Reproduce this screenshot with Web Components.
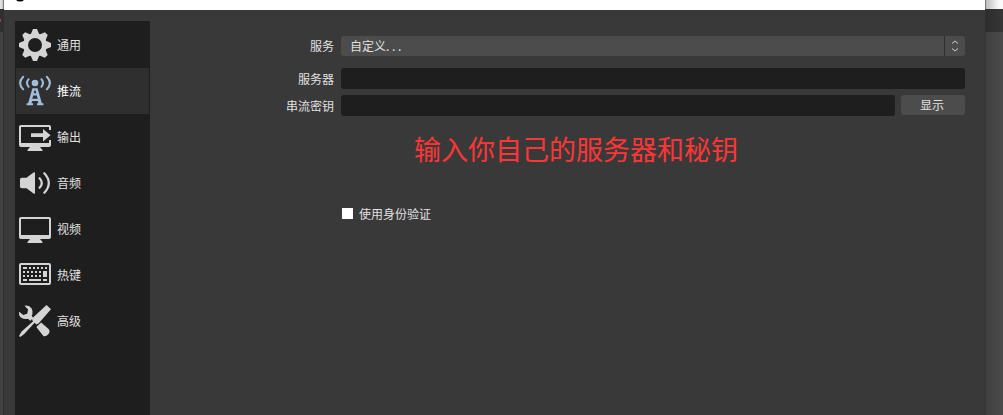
<!DOCTYPE html>
<html lang="zh-CN">
<head>
  <meta charset="utf-8">
  <title>设置</title>
  <style>
    body {
      margin: 0;
      height: 415px;
      overflow: hidden;
      font: 12px/16px "Noto Sans CJK SC", sans-serif;
      color: #e1e0e1;
    }
  </style>
</head>
<body>
  <settings-window>
    <nav-list slot="nav">
      <nav-item icon="gear">通用</nav-item>
      <nav-item icon="stream" active>推流</nav-item>
      <nav-item icon="output">输出</nav-item>
      <nav-item icon="audio">音频</nav-item>
      <nav-item icon="video">视频</nav-item>
      <nav-item icon="hotkeys">热键</nav-item>
      <nav-item icon="tools">高级</nav-item>
    </nav-list>
    <form-row label="服务" class="service"><select-box>自定义<span style="letter-spacing:2.7px">...</span></select-box></form-row>
    <form-row label="服务器" class="server"><text-field></text-field></form-row>
    <form-row label="串流密钥" class="key">
      <text-field></text-field>
      <push-button>显示</push-button>
    </form-row>
    <note-text>输入你自己的服务器和秘钥</note-text>
    <check-box>使用身份验证</check-box>
  </settings-window>

  <script>
    // One tooth of the gear, repeated every 45 degrees
    const teeth = [0, 45, 90, 135, 180, 225, 270, 315]
      .map((angle) => `<path d="M11.500 6 14 0h4l2.500 6z" transform="rotate(${angle} 16 16)"/>`)
      .join("");

    const icons = {
      gear: `<circle cx="16" cy="16" r="9.400" fill="none" stroke="currentColor" stroke-width="4.800"/>${teeth}`,
      stream: `<circle cx="16" cy="8" r="3.300"/>
        <g fill="none" stroke="currentColor" stroke-width="2" stroke-linecap="round">
          <path d="M9.600 4.200q-3.200 3.800 0 7.600M22.400 4.200q3.200 3.800 0 7.600M4.200 1.800q-6.200 6.300 0 12.600M27.800 1.800q6.200 6.300 0 12.600"/>
        </g>
        <path fill-rule="evenodd" d="M13.400 13.200h5.200l4.300 15h1.500v2H18v-2h1.400l-.6-2.200h-5.600l-.6 2.200H14v2H7.600v-2h1.500zm2 2.300-.7 2.700h2.600l-.7-2.700zm-1.200 4.900-.9 3.400h5.400l-.9-3.400z"/>`,
      output: `<path fill-rule="evenodd" d="M2 4h28q2 0 2 2v3h-2V6H2v16h28v-3h2v5q0 2-2 2h-9l2.500 3v1H8.500v-1l2.500-3H2q-2 0-2-2V6q0-2 2-2z"/><path d="M12 12.200h12V8l7.600 6.200-7.600 6.200V16H12z"/>`,
      audio: `<path d="M1 12.500q0-1.700 1.700-1.700h4.800l7-5.200q1.500-1 1.500.7v19.400q0 1.700-1.500.7l-7-5.200H2.700Q1 21.200 1 19.500z"/>
        <path fill="none" stroke="currentColor" stroke-width="2.200" stroke-linecap="round" d="M20.600 11.200q4.400 4.800 0 9.600M25.300 6.200q9 9.800 0 19.600"/>`,
      video: `<path fill-rule="evenodd" d="M2 4h28q2 0 2 2v18q0 2-2 2h-9l2.500 3v1H8.500v-1l2.500-3H2q-2 0-2-2V6q0-2 2-2zm0 2v16h28V6z"/>`,
      hotkeys: `<path fill-rule="evenodd" d="M2 4h28q2 0 2 2v18q0 2-2 2H2q-2 0-2-2V6q0-2 2-2zm0 2v18h28V6z"/>
        <path d="M4 8h4v2H4zm6 0h2v2h-2zm4 0h2v2h-2zm4 0h2v2h-2zm4 0h2v2h-2zm4 0h2v2h-2zM4 12h2v2H4zm4 0h2v2H8zm4 0h2v2h-2zm4 0h2v2h-2zm4 0h2v2h-2zM4 16h2v2H4zm4 0h2v2H8zm4 0h2v2h-2zm4 0h2v2h-2zm4 0h2v2h-2zm4-4h4v6h-4zM4 20h4v2H4zm6 0h12v2H10zm14 0h4v2h-4z"/>`,
      tools: `<path d="M5.500.8q4.700-1 7.200 2.800 1.300 2.600.7 5.600l-.7 1.800 1.500 1.700-2.800 3-2.500-2Q2.500 15 .3 10.200-.3 8.500.2 6.700l4 3.200 4-1.200.9-4.200zM17.800 21.500l4.300-4 7.500 6.500q2 2.600-.1 4.900-2.500 3-5.100 2.100L17.700 22.600q-.5-.5.100-1.100zM27.500 0 32 4.300 19.500 18.500l-2.200.9-1.700-1.600L5 29.300 1.200 32 0 31l2.600-4.500L14.200 16.300l-1.200-1.400.8-2.200z"/>`
    };

    // Base class: puts the markup of the subclass in an open shadow root
    class BaseElement extends HTMLElement {
      constructor() {
        super();
        this.attachShadow({ mode: "open" });
      }

      connectedCallback() {
        const template = document.createElement("template");
        template.innerHTML = this.render();
        this.shadowRoot.replaceChildren(template.content.cloneNode(true));
      }
    }

    class SettingsWindow extends BaseElement {
      render() {
        return `
          <style>
            :host {
              display: grid;
              grid-template-columns: 4px 981px 18px;
              height: 415px;
            }
            .behind {
              display: grid;
              grid-template-rows: 9px 23px 1fr;
            }
            .left { background: #424242; box-shadow: inset -1px 0 #303030; }
            .left .top { background: linear-gradient(90deg, #ebe9e6, #c9c8c6 75%, #777 76%); }
            .left .bar { background: #2f2f2f; display: flex; align-items: center; }
            .left .bar i { width: 1px; height: 3px; background: #a93d3d; }
            .right { background: linear-gradient(90deg, #363636 1px, #404040 1px, #4a4a4a); }
            .right .top { background: linear-gradient(90deg, #777 1px, #bdbdbd 1px, #fafafa 14px); }
            .right .bar { background: linear-gradient(90deg, #2d2d2d, #363636); }
            .window {
              display: grid;
              grid-template-rows: 10px 1fr;
              background: #3a393a;
            }
            .title {
              background: #fff;
              display: flex;
              padding-left: 12px;
              overflow: hidden;
            }
            .title svg { width: 8px; height: 2px; }
            .body {
              display: grid;
              grid-template-columns: 135px 1fr;
              padding: 11px 20px 0 11px;
            }
            .panel {
              display: flex;
              flex-direction: column;
              padding-top: 15px;
            }
          </style>
          <div class="behind left"><div class="top"></div><div class="bar"><i></i></div></div>
          <div class="window">
            <div class="title"><svg viewBox="0 0 8 2"><ellipse cx="4" cy="-1" rx="4" ry="2.500"/></svg></div>
            <div class="body">
              <slot name="nav"></slot>
              <div class="panel"><slot></slot></div>
            </div>
          </div>
          <div class="behind right"><div class="top"></div><div class="bar"></div></div>
        `;
      }
    }

    class NavList extends BaseElement {
      render() {
        return `
          <style>
            :host {
              display: flex;
              flex-direction: column;
              box-sizing: border-box;
              background: #1f1e1f;
              padding: 1px;
            }
          </style>
          <slot></slot>
        `;
      }
    }

    class NavItem extends BaseElement {
      render() {
        return `
          <style>
            :host {
              display: flex;
              align-items: center;
              gap: 6px;
              height: 46px;
              padding-left: 3px;
            }
            :host([active]) { background: #2f2f2f; color: #fff; }
            svg {
              width: 32px;
              height: 32px;
              color: #d4d4d4;
              fill: currentColor;
              overflow: visible;
            }
            :host([active]) svg { color: #a1bddc; }
          </style>
          <svg viewBox="0 0 32 32">${icons[this.getAttribute("icon")]}</svg>
          <span><slot></slot></span>
        `;
      }
    }

    class FormRow extends BaseElement {
      render() {
        return `
          <style>
            :host {
              display: grid;
              grid-template-columns: 184px 1fr;
              column-gap: 7px;
              align-items: center;
              height: 21px;
              margin-bottom: 6px;
            }
            :host(.service) { height: 20px; margin-bottom: 12px; }
            label { text-align: right; }
            .controls { display: flex; gap: 6px; }
          </style>
          <label>${this.getAttribute("label")}</label>
          <div class="controls"><slot></slot></div>
        `;
      }
    }

    class SelectBox extends BaseElement {
      render() {
        return `
          <style>
            :host {
              display: flex;
              flex: 1;
              height: 20px;
              border-radius: 3px;
              background: #4c4c4c;
              overflow: hidden;
            }
            .value { flex: 1; padding-left: 9px; line-height: 20px; }
            .arrows {
              display: flex;
              align-items: center;
              justify-content: center;
              width: 20px;
              border-left: 1px solid #2f2f2f;
            }
            svg { width: 8px; height: 12px; fill: none; stroke: #cfcfcf; }
          </style>
          <div class="value"><slot></slot></div>
          <div class="arrows"><svg viewBox="0 0 8 12"><path d="M1 3.500 4 1l3 2.500M1 8.500 4 11l3-2.500"/></svg></div>
        `;
      }
    }

    class TextField extends BaseElement {
      render() {
        return `
          <style>
            :host {
              display: block;
              flex: 1;
              height: 21px;
              border-radius: 3px;
              background: #1f1e1f;
            }
          </style>
        `;
      }
    }

    class PushButton extends BaseElement {
      render() {
        return `
          <style>
            :host {
              display: block;
              box-sizing: border-box;
              width: 64px;
              height: 20px;
              padding-right: 2px;
              line-height: 20px;
              text-align: center;
              border-radius: 3px;
              background: #4c4c4c;
            }
          </style>
          <slot></slot>
        `;
      }
    }

    class NoteText extends BaseElement {
      render() {
        return `
          <style>
            :host {
              display: block;
              margin: 7px 0 0 264px;
              font-size: 27px;
              line-height: 40px;
              color: #ff3636;
            }
          </style>
          <slot></slot>
        `;
      }
    }

    class CheckBox extends BaseElement {
      render() {
        return `
          <style>
            :host {
              display: flex;
              align-items: center;
              gap: 6px;
              margin: 37px 0 0 192px;
            }
            i { width: 11px; height: 11px; margin-bottom: 1px; background: #fff; }
          </style>
          <i></i><span><slot></slot></span>
        `;
      }
    }

    // Define the elements
    customElements.define("settings-window", SettingsWindow);
    customElements.define("nav-list", NavList);
    customElements.define("nav-item", NavItem);
    customElements.define("form-row", FormRow);
    customElements.define("select-box", SelectBox);
    customElements.define("text-field", TextField);
    customElements.define("push-button", PushButton);
    customElements.define("note-text", NoteText);
    customElements.define("check-box", CheckBox);
  </script>
</body>
</html>
